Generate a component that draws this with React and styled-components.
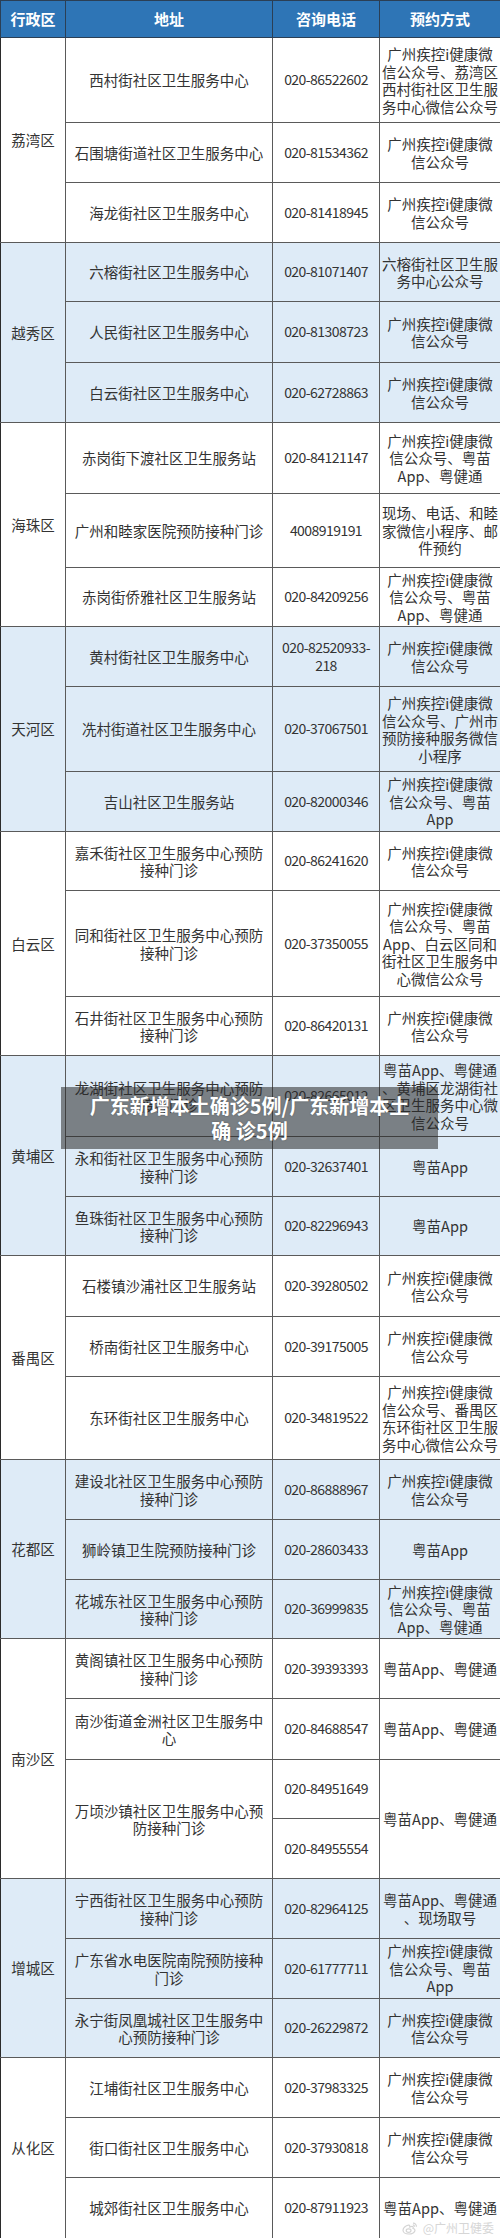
import React from "react";
import styled, { createGlobalStyle } from "styled-components";

const GlobalStyle = createGlobalStyle`
  html, body {
    margin: 0;
    padding: 0;
    background: #ffffff;
  }
  body {
    font-family: "Noto Sans CJK SC", "Noto Sans", sans-serif;
  }
`;

const Page = styled.div`
  position: relative;
  width: 500px;
`;

const Table = styled.table`
  width: 500px;
  table-layout: fixed;
  border-collapse: collapse;
  border: 1px solid #2b2b2b;
  color: #333333;
  font-size: 14.5px;
  line-height: 17.5px;
`;

const HeadRow = styled.tr`
  height: 37px;
  background: #2e75b6;
`;

const HeadCell = styled.th`
  border: 1px solid #2b3f55;
  color: #ffffff;
  font-size: 15px;
  font-weight: 700;
  text-align: center;
  vertical-align: middle;
  padding: 0;
`;

const Row = styled.tr`
  height: ${(p) => p.$h}px;
  background: ${(p) => (p.$tint ? "#deebf7" : "#ffffff")};
`;

const Cell = styled.td`
  border: 1px solid #5a5a5a;
  text-align: center;
  vertical-align: middle;
  padding: 0 1px;
  white-space: nowrap;
  overflow: hidden;
`;

const DistrictCell = styled(Cell)`
  border-left: 1px solid #2b2b2b;
`;

const PhoneCell = styled(Cell)`
  letter-spacing: -0.55px;
  font-size: 14px;
`;

const Banner = styled.div`
  position: absolute;
  left: 61px;
  top: 1087px;
  width: 377px;
  height: 62px;
  background: rgba(40, 40, 40, 0.55);
  display: flex;
  align-items: center;
  justify-content: center;
  text-align: center;
  color: #ffffff;
  font-size: 20px;
  font-weight: 700;
  line-height: 25px;
  text-shadow: 0 0 2px rgba(0, 0, 0, 0.3);
`;

const Watermark = styled.div`
  position: absolute;
  right: 6px;
  bottom: 4px;
  display: flex;
  align-items: center;
  gap: 5px;
  color: #d6d6d6;
  font-size: 12px;
  line-height: 14px;
`;

const Lines = ({ lines }) =>
  lines.map((l, i) => (
    <React.Fragment key={i}>
      {i > 0 && <br />}
      {l}
    </React.Fragment>
  ));

const JK = ["广州疾控i健康微", "信公众号"];
const JK_YM = ["广州疾控i健康微", "信公众号、粤苗", "App、粤健通"];
const YM = ["粤苗App"];
const YMJ = ["粤苗App、粤健通"];
const MZ = "接种门诊";

const groups = [
  {
    district: "荔湾区",
    rows: [
      { name: ["西村街社区卫生服务中心"], phone: ["020-86522602"], way: ["广州疾控i健康微", "信公众号、荔湾区", "西村街社区卫生服", "务中心微信公众号"], h: 85 },
      { name: ["石围塘街道社区卫生服务中心"], phone: ["020-81534362"], way: JK, h: 60 },
      { name: ["海龙街社区卫生服务中心"], phone: ["020-81418945"], way: JK, h: 60 },
    ],
  },
  {
    district: "越秀区",
    rows: [
      { name: ["六榕街社区卫生服务中心"], phone: ["020-81071407"], way: ["六榕街社区卫生服", "务中心公众号"], h: 59 },
      { name: ["人民街社区卫生服务中心"], phone: ["020-81308723"], way: JK, h: 61 },
      { name: ["白云街社区卫生服务中心"], phone: ["020-62728863"], way: JK, h: 60 },
    ],
  },
  {
    district: "海珠区",
    rows: [
      { name: ["赤岗街下渡社区卫生服务站"], phone: ["020-84121147"], way: JK_YM, h: 71 },
      { name: ["广州和睦家医院预防接种门诊"], phone: ["4008919191"], way: ["现场、电话、和睦", "家微信小程序、邮", "件预约"], h: 74 },
      { name: ["赤岗街侨雅社区卫生服务站"], phone: ["020-84209256"], way: JK_YM, h: 59 },
    ],
  },
  {
    district: "天河区",
    rows: [
      { name: ["黄村街社区卫生服务中心"], phone: ["020-82520933-", "218"], way: JK, h: 60 },
      { name: ["冼村街道社区卫生服务中心"], phone: ["020-37067501"], way: ["广州疾控i健康微", "信公众号、广州市", "预防接种服务微信", "小程序"], h: 85 },
      { name: ["吉山社区卫生服务站"], phone: ["020-82000346"], way: ["广州疾控i健康微", "信公众号、粤苗", "App"], h: 60 },
    ],
  },
  {
    district: "白云区",
    rows: [
      { name: ["嘉禾街社区卫生服务中心预防", MZ], phone: ["020-86241620"], way: JK, h: 59 },
      { name: ["同和街社区卫生服务中心预防", MZ], phone: ["020-37350055"], way: ["广州疾控i健康微", "信公众号、粤苗", "App、白云区同和", "街社区卫生服务中", "心微信公众号"], h: 106 },
      { name: ["石井街社区卫生服务中心预防", MZ], phone: ["020-86420131"], way: JK, h: 59 },
    ],
  },
  {
    district: "黄埔区",
    rows: [
      { name: ["龙湖街社区卫生服务中心预防", MZ], phone: ["020-82665012"], way: ["粤苗App、粤健通", "、黄埔区龙湖街社", "区卫生服务中心微", "信公众号"], h: 81 },
      { name: ["永和街社区卫生服务中心预防", MZ], phone: ["020-32637401"], way: YM, h: 60 },
      { name: ["鱼珠街社区卫生服务中心预防", MZ], phone: ["020-82296943"], way: YM, h: 59 },
    ],
  },
  {
    district: "番禺区",
    rows: [
      { name: ["石楼镇沙浦社区卫生服务站"], phone: ["020-39280502"], way: JK, h: 61 },
      { name: ["桥南街社区卫生服务中心"], phone: ["020-39175005"], way: JK, h: 60 },
      { name: ["东环街社区卫生服务中心"], phone: ["020-34819522"], way: ["广州疾控i健康微", "信公众号、番禺区", "东环街社区卫生服", "务中心微信公众号"], h: 83 },
    ],
  },
  {
    district: "花都区",
    rows: [
      { name: ["建设北社区卫生服务中心预防", MZ], phone: ["020-86888967"], way: JK, h: 60 },
      { name: ["狮岭镇卫生院预防接种门诊"], phone: ["020-28603433"], way: YM, h: 60 },
      { name: ["花城东社区卫生服务中心预防", MZ], phone: ["020-36999835"], way: JK_YM, h: 59 },
    ],
  },
  {
    district: "南沙区",
    rows: [
      { name: ["黄阁镇社区卫生服务中心预防", MZ], phone: ["020-39393393"], way: YMJ, h: 60 },
      { name: ["南沙街道金洲社区卫生服务中", "心"], phone: ["020-84688547"], way: YMJ, h: 61 },
      { name: ["万顷沙镇社区卫生服务中心预", "防接种门诊"], phones: ["020-84951649", "020-84955554"], way: YMJ, hs: [59, 60] },
    ],
  },
  {
    district: "增城区",
    rows: [
      { name: ["宁西街社区卫生服务中心预防", MZ], phone: ["020-82964125"], way: ["粤苗App、粤健通", "、现场取号"], h: 60 },
      { name: ["广东省水电医院南院预防接种", "门诊"], phone: ["020-61777711"], way: ["广州疾控i健康微", "信公众号、粤苗", "App"], h: 60 },
      { name: ["永宁街凤凰城社区卫生服务中", "心预防接种门诊"], phone: ["020-26229872"], way: JK, h: 59 },
    ],
  },
  {
    district: "从化区",
    rows: [
      { name: ["江埔街社区卫生服务中心"], phone: ["020-37983325"], way: JK, h: 60 },
      { name: ["街口街社区卫生服务中心"], phone: ["020-37930818"], way: JK, h: 60 },
      { name: ["城郊街社区卫生服务中心"], phone: ["020-87911923"], way: YMJ, h: 61 },
    ],
  },
];

const WeiboMark = () => (
  <svg width="16" height="13" viewBox="0 0 16 13" fill="none" stroke="#d4d4d4" strokeWidth="1.2">
    <path d="M6.5 3.2C3.6 3.6 1 5.9 1 8.2c0 2.3 2.8 3.8 5.8 3.8 3.4 0 6.2-1.7 6.2-3.7 0-1.3-1.3-1.7-2-1.9.4-.9.3-1.9-.9-2-.8-.1-1.9.4-2.4.6.3-.9.2-2-1.2-1.8z" />
    <ellipse cx="6.6" cy="8.6" rx="2.4" ry="1.8" />
    <path d="M11 1.2c1.9-.1 3.6 1.5 3.4 3.6M10.8 2.9c.9 0 1.7.8 1.6 1.8" />
  </svg>
);

const renderGroup = (g, gi) => {
  const tint = gi % 2 === 1;
  const span = g.rows.reduce((n, r) => n + (r.phones ? r.phones.length : 1), 0);
  const out = [];
  g.rows.forEach((r, ri) => {
    const first = ri === 0;
    const district = first ? <DistrictCell rowSpan={span}>{g.district}</DistrictCell> : null;
    if (r.phones) {
      out.push(
        <Row key={`${gi}-${ri}-a`} $tint={tint} $h={r.hs[0]}>
          {district}
          <Cell rowSpan={2}><Lines lines={r.name} /></Cell>
          <PhoneCell>{r.phones[0]}</PhoneCell>
          <Cell rowSpan={2}><Lines lines={r.way} /></Cell>
        </Row>,
        <Row key={`${gi}-${ri}-b`} $tint={tint} $h={r.hs[1]}>
          <PhoneCell>{r.phones[1]}</PhoneCell>
        </Row>
      );
    } else {
      out.push(
        <Row key={`${gi}-${ri}`} $tint={tint} $h={r.h}>
          {district}
          <Cell><Lines lines={r.name} /></Cell>
          <PhoneCell><Lines lines={r.phone} /></PhoneCell>
          <Cell><Lines lines={r.way} /></Cell>
        </Row>
      );
    }
  });
  return out;
};

export default function App() {
  return (
    <Page>
      <GlobalStyle />
      <Table>
        <colgroup>
          <col style={{ width: "65px" }} />
          <col style={{ width: "207px" }} />
          <col style={{ width: "107px" }} />
          <col style={{ width: "121px" }} />
        </colgroup>
        <thead>
          <HeadRow>
            <HeadCell>行政区</HeadCell>
            <HeadCell>地址</HeadCell>
            <HeadCell>咨询电话</HeadCell>
            <HeadCell>预约方式</HeadCell>
          </HeadRow>
        </thead>
        <tbody>{groups.map(renderGroup)}</tbody>
      </Table>
      <Banner>
        <div>
          广东新增本土确诊5例/广东新增本土
          <br />
          确 诊5例
        </div>
      </Banner>
      <Watermark>
        <WeiboMark />
        <span>@广州卫健委</span>
      </Watermark>
    </Page>
  );
}
